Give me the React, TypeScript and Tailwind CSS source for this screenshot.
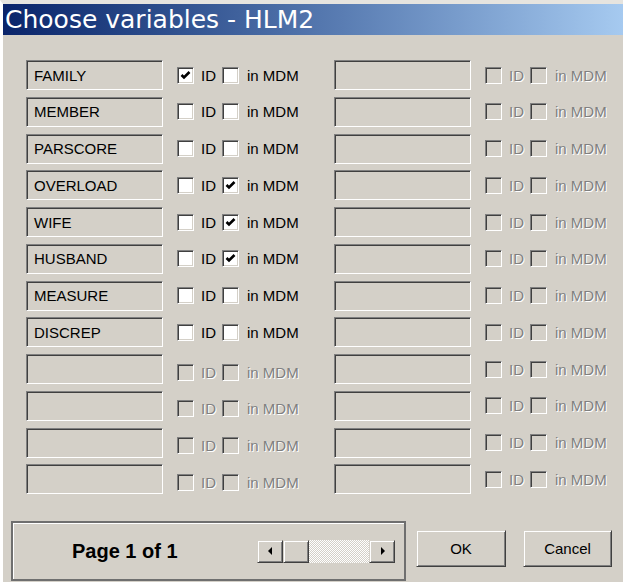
import React from "react";

type Row = { name: string; id: boolean; mdm: boolean; enabled: boolean; low?: boolean };

const leftRows: Row[] = [
  { name: "FAMILY", id: true, mdm: false, enabled: true },
  { name: "MEMBER", id: false, mdm: false, enabled: true },
  { name: "PARSCORE", id: false, mdm: false, enabled: true },
  { name: "OVERLOAD", id: false, mdm: true, enabled: true },
  { name: "WIFE", id: false, mdm: true, enabled: true },
  { name: "HUSBAND", id: false, mdm: true, enabled: true },
  { name: "MEASURE", id: false, mdm: false, enabled: true },
  { name: "DISCREP", id: false, mdm: false, enabled: true },
  { name: "", id: false, mdm: false, enabled: false, low: true },
  { name: "", id: false, mdm: false, enabled: false, low: true },
  { name: "", id: false, mdm: false, enabled: false, low: true },
  { name: "", id: false, mdm: false, enabled: false, low: true },
];

const rightRows: Row[] = Array.from({ length: 12 }, () => ({
  name: "",
  id: false,
  mdm: false,
  enabled: false,
}));

function CheckBox({ checked, enabled }: { checked: boolean; enabled: boolean }) {
  return (
    <div
      className={`flex h-[17px] w-[17px] shrink-0 items-center justify-center border border-t-[#808080] border-l-[#808080] border-b-white border-r-white shadow-[inset_1px_1px_0_#404040,inset_-1px_-1px_0_#d4d0c8] ${
        enabled ? "bg-white" : "bg-[#d4d0c8]"
      }`}
    >
      {checked && (
        <svg width="11" height="11" viewBox="0 0 11 11">
          <path d="M1.5 5 L4 7.5 L9.5 2" fill="none" stroke="#000" strokeWidth="2.6" />
        </svg>
      )}
    </div>
  );
}

function Label({ text, enabled }: { text: string; enabled: boolean }) {
  return (
    <span
      className={
        enabled
          ? "text-black"
          : "text-[#808080] [text-shadow:1px_1px_0_#ffffff]"
      }
    >
      {text}
    </span>
  );
}

function VarRow({ row }: { row: Row }) {
  return (
    <div className="flex h-[30px] items-center">
      <div className="flex h-[30px] w-[137px] shrink-0 items-center border border-t-[#808080] border-l-[#808080] border-b-white border-r-white bg-[#d4d0c8] pl-[7px] shadow-[inset_1px_1px_0_#404040,inset_-1px_-1px_0_#d4d0c8]">
        <span className="text-black">{row.name}</span>
      </div>
      <div className={`flex items-center ${row.low ? "pt-[6px]" : ""}`}>
        <div className="ml-[14px]">
          <CheckBox checked={row.id} enabled={row.enabled} />
        </div>
        <div className="ml-[7px] w-[14px]">
          <Label text="ID" enabled={row.enabled} />
        </div>
        <div className="ml-[7px]">
          <CheckBox checked={row.mdm} enabled={row.enabled} />
        </div>
        <div className="ml-[8px] whitespace-nowrap">
          <Label text="in MDM" enabled={row.enabled} />
        </div>
      </div>
    </div>
  );
}

function RaisedBox({ className, children }: { className: string; children?: React.ReactNode }) {
  return (
    <div
      className={`flex items-center justify-center border border-t-[#d4d0c8] border-l-[#d4d0c8] border-b-[#404040] border-r-[#404040] bg-[#d4d0c8] shadow-[inset_1px_1px_0_#ffffff,inset_-1px_-1px_0_#808080] ${className}`}
    >
      {children}
    </div>
  );
}

export default function App() {
  return (
    <div className="h-[584px] w-[623px] overflow-hidden border-l-[3px] border-t-[4px] border-b-[2px] border-l-white border-t-[#e6e4df] border-b-white bg-[#d4d0c8] font-['Liberation_Sans',Arial,sans-serif] text-[15px] leading-none">
      <div className="flex h-[31px] items-center bg-gradient-to-r from-[#0a246a] to-[#a6caf0] pl-[2px]">
        <span className="font-['DejaVu_Sans',sans-serif] text-[25px] leading-none text-white">
          Choose variables - HLM2
        </span>
      </div>

      <div className="grid grid-cols-[308px_1fr] pl-[23px] pt-[25px]">
        <div className="flex flex-col gap-[6.75px]">
          {leftRows.map((r, i) => (
            <VarRow key={i} row={r} />
          ))}
        </div>
        <div className="flex flex-col gap-[6.75px]">
          {rightRows.map((r, i) => (
            <VarRow key={i} row={r} />
          ))}
        </div>
      </div>

      <div className="flex items-start pl-[8px] pt-[27px]">
        <div className="flex h-[60px] w-[395px] items-center border-2 border-[#6f6f6f] shadow-[inset_1px_1px_0_#ffffff] pl-[59px] pr-[9px]">
          <span className="text-[20px] font-bold text-black">Page 1 of 1</span>
          <div className="ml-auto flex h-[23px]">
            <RaisedBox className="w-[26px]">
              <svg width="5" height="8" viewBox="0 0 5 8">
                <path d="M4 0 L0 4 L4 8 Z" fill="#000" />
              </svg>
            </RaisedBox>
            <RaisedBox className="w-[26px]" />
            <div className="w-[60px] bg-[repeating-conic-gradient(#ffffff_0_25%,#d4d0c8_0_50%)] bg-[length:2px_2px]" />
            <RaisedBox className="w-[26px]">
              <svg width="5" height="8" viewBox="0 0 5 8">
                <path d="M1 0 L5 4 L1 8 Z" fill="#000" />
              </svg>
            </RaisedBox>
          </div>
        </div>
        <RaisedBox className="ml-[10px] mt-[9px] h-[37px] w-[90px]">
          <span className="text-black">OK</span>
        </RaisedBox>
        <RaisedBox className="ml-[17px] mt-[9px] h-[37px] w-[89px]">
          <span className="text-black">Cancel</span>
        </RaisedBox>
      </div>
    </div>
  );
}
